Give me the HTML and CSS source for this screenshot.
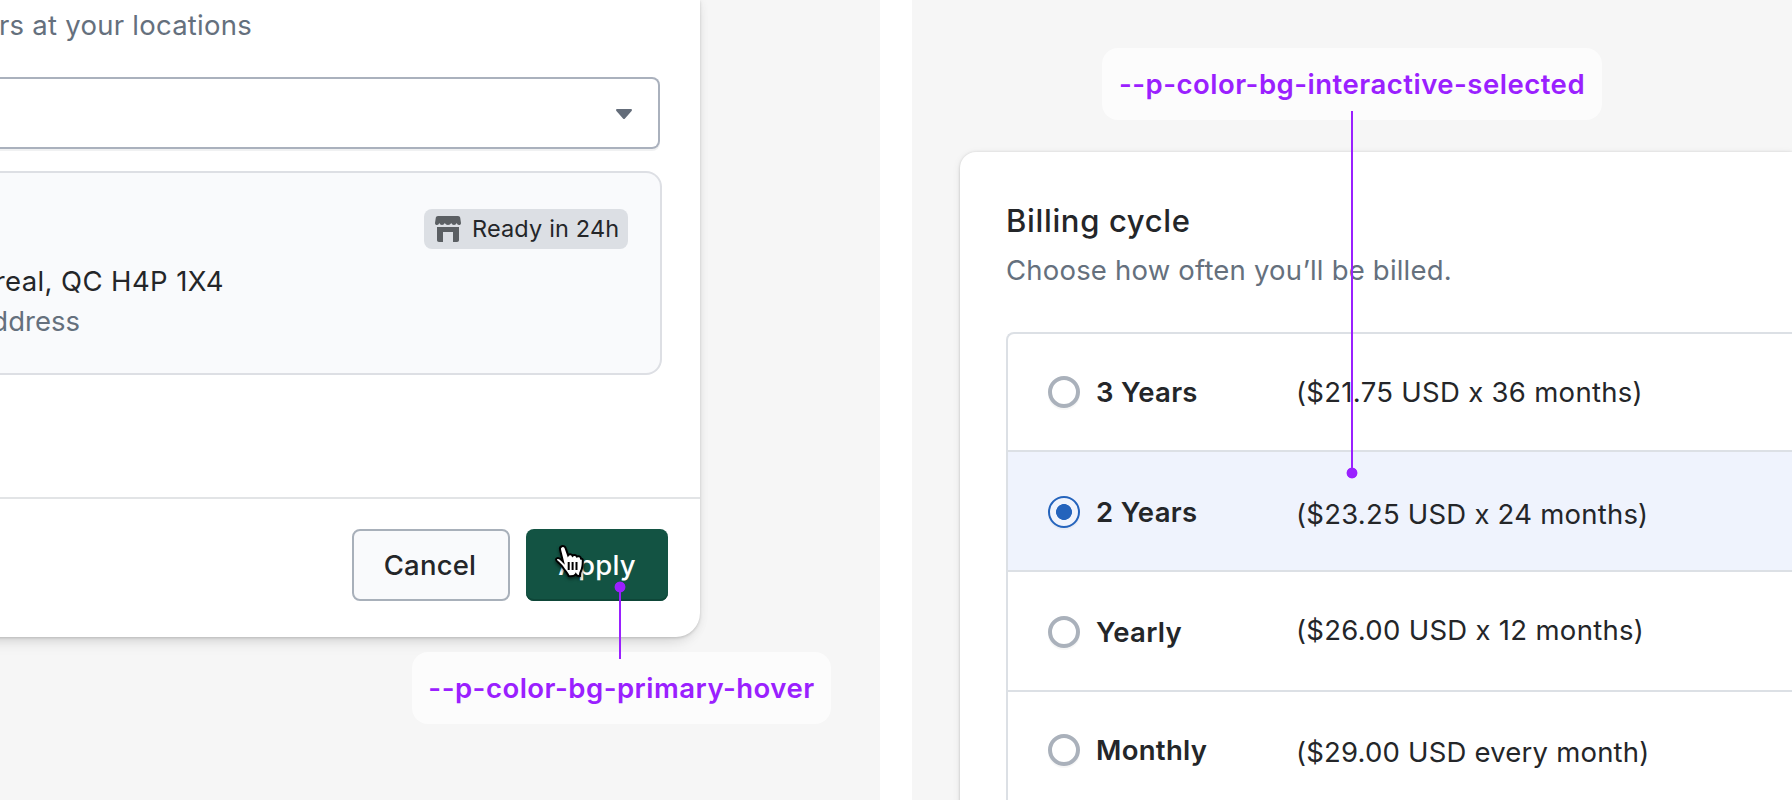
FILE: index.html
```html
<!DOCTYPE html>
<html lang="en">
<head>
<meta charset="utf-8">
<title>Color tokens</title>
<link rel="stylesheet" href="styles.css">
</head>
<body>
<main class="examples">
  <section class="panel panel-delivery">
    <div class="modal">
      <div class="modal-body">
        <p class="line subdued clip w-intro"><span>rs at your locations</span></p>
        <div class="select">
          <svg class="caret" width="16" height="10" viewBox="0 0 16 10"><path d="M1.2 0h13.6c1.1 0 1.5 1.2.8 2L9 9.4c-.6.7-1.4.7-2 0L.4 2C-.3 1.200.1 0 1.200 0z"/></svg>
        </div>
        <div class="location">
          <div class="badge">
            <svg class="store" width="26" height="26" viewBox="0 0 26 26"><path d="M3 0h20c1.200 0 2 .7 2.200 1.800L26 7c0 1.500-.8 2-2 2-1.300 0-1.700-.8-2.300-2-.6 1.200-1.400 2-2.700 2s-2.100-.8-2.800-2c-.7 1.200-1.700 2-3.200 2s-2.500-.8-3.200-2C9.100 8.200 8.300 9 7 9S4.900 8.200 4.300 7C3.700 8.200 3.300 9 2 9 .8 9 0 8.500 0 7L.8 1.800C1 .7 1.800 0 3 0zM2 11h22v13c0 1.300-.7 2-2 2h-4V16H8v10H4c-1.300 0-2-.7-2-2z"/></svg>
            <span>Ready in 24h</span>
          </div>
          <p class="line clip w-address"><span>real, QC H4P 1X4</span></p>
          <p class="line subdued clip w-link"><span>ddress</span></p>
        </div>
      </div>
      <div class="modal-footer">
        <button class="button">Cancel</button>
        <button class="button button-primary">Apply</button>
      </div>
    </div>
    <div class="token token-hover">--p-color-bg-primary-hover</div>
    <div class="pointer pointer-hover"></div>
    <svg class="cursor" width="34" height="38" viewBox="0 0 34 38"><path d="M9.800 3.200c1.800-.6 3.300.3 3.900 2.200l2.400 6.800c1-1.500 3.700-1.200 4.400.5 1.300-1.300 3.700-.9 4.300.8 2-.9 3.800.1 4.300 2.200 1-.2 1.800.6 1.700 2 0 4-.3 7.300-1.800 10.300-.6 1.200-1 1.800-1 3.200v1.800c-1.700.4-3.100 0-4.200-1.800-1.200 1.900-3 2.200-7 1.900-1.100-2.800-3.500-5-5.700-8.300-1.300-1.900-2.600-3.400-4.200-4.800-1.800-1.500-2.900-2.300-2.900-3.500.2-1.500 1.900-1.900 3.500-1 1.400.8 2.500 2 3.500 3L8.100 7c-.5-1.800.1-3.300 1.700-3.800z"/><path class="cursor-lines" d="M16.700 19v8M20.600 19v8M24.500 19v8"/></svg>
  </section>
  <section class="panel panel-billing">
    <div class="billing">
      <h2 class="title">Billing cycle</h2>
      <p class="line subdued choose">Choose how often you’ll be billed.</p>
      <div class="options">
        <label class="option"><i class="radio"></i><b>3 Years</b><span class="price p1">($21.75 USD x 36 months)</span></label>
        <label class="option selected"><i class="radio"></i><b>2 Years</b><span class="price p2">($23.25 USD x 24 months)</span></label>
        <label class="option"><i class="radio"></i><b>Yearly</b><span class="price p3">($26.00 USD x 12 months)</span></label>
        <label class="option last"><i class="radio"></i><b>Monthly</b><span class="price p4">($29.00 USD every month)</span></label>
      </div>
    </div>
    <div class="token token-selected">--p-color-bg-interactive-selected</div>
    <div class="pointer pointer-selected"></div>
  </section>
</main>
</body>
</html>
```
FILE: styles.css
```css
* { box-sizing: border-box; }
body { margin: 0; background: #fff; overflow: hidden; font: 27.5px/40px Inter, "Liberation Sans", sans-serif; color: #242629; }
p, h2 { margin: 0; }
.examples { display: grid; grid-template-columns: 880px 880px; gap: 32px; height: 800px; }
.panel { position: relative; background: #f6f6f6; overflow: hidden; }
.line { white-space: nowrap; height: 40px; }
.subdued { color: #65707d; }
.clip { display: flex; justify-content: flex-end; }

.modal { width: 740px; margin-left: -40px; padding-left: 40px; height: 637px; background: #fff; border-radius: 0 0 24px 0; box-shadow: 0 1px 3px rgba(0,0,0,.16), -6px 4px 16px rgba(0,0,0,.11), 0 2px 12px rgba(0,0,0,.06); display: flex; flex-direction: column; }
.modal-body { height: 497px; padding-top: 5px; }
.w-intro { width: 252px; letter-spacing: .25px; }
.select { width: 660px; height: 72px; margin-top: 32px; border: 2px solid #aab1bd; border-left: 0; border-radius: 0 8px 8px 0; box-shadow: 0 2px 0 #f0f1f2; display: flex; align-items: center; justify-content: flex-end; padding-right: 26px; }
.caret { fill: #646d7a; margin-top: 1px; }
.location { width: 662px; height: 204px; margin-top: 22px; padding: 36px 32px 0 0; border: 2px solid #dddfe4; border-left: 0; border-radius: 0 16px 16px 0; background: #f9fafc; display: flex; flex-direction: column; }
.badge { align-self: flex-end; width: 204px; height: 40px; margin-bottom: 12px; padding-left: 11px; border-radius: 8px; background: #dcdfe4; display: flex; align-items: center; gap: 11px; font-size: 23.500px; letter-spacing: .15px; white-space: nowrap; }
.store { fill: #5b5f63; flex: none; }
.w-address { width: 224px; letter-spacing: .4px; }
.w-link { width: 80px; }
.modal-footer { height: 140px; border-top: 2px solid #e2e4e6; padding: 30px 32px 0 0; display: flex; justify-content: flex-end; gap: 16px; }
.button { width: 158px; height: 72px; padding: 0 2px 0 0; border: 2px solid #a8b0ba; border-radius: 8px; background: #f9fafc; font: 500 27.5px/40px Inter, sans-serif; letter-spacing: .2px; color: #242629; }
.button-primary { width: 142px; padding: 0; border: 0; background: #135343; color: #fff; box-shadow: inset 0 -2px 0 #0e4638; }

.token { position: absolute; height: 72px; border-radius: 16px; background: #fcfcfc; color: #9a20ff; font-weight: 600; line-height: 72px; letter-spacing: .5px; text-align: center; white-space: nowrap; }
.token-hover { left: 412px; top: 652px; width: 419px; }
.token-selected { left: 190px; top: 48px; width: 500px; }
.pointer { position: absolute; width: 2px; background: #9a20ff; }
.pointer::after { content: ""; position: absolute; left: -5px; width: 12px; height: 12px; background: radial-gradient(circle, #9a20ff 5px, transparent 5.800px); }
.pointer-hover { left: 619px; top: 587px; height: 72px; }
.pointer-hover::after { top: -6px; }
.pointer-selected { left: 439px; top: 111px; height: 362px; }
.pointer-selected::after { bottom: -6px; }
.cursor { position: absolute; left: 552px; top: 543px; fill: #fff; stroke: #000; stroke-width: 2; filter: drop-shadow(0 2px 1.500px rgba(0,0,0,.5)); }

.billing { margin: 152px 0 0 48px; height: 700px; padding: 49px 0 0 46px; background: #fff; border-radius: 16px 0 0 0; box-shadow: 0 0 3px rgba(0,0,0,.12), 0 2px 8px rgba(0,0,0,.08), 0 3px 3px rgba(0,0,0,.08); }
.title { font-size: 31px; font-weight: 500; line-height: 40px; height: 49px; letter-spacing: .65px; }
.choose { letter-spacing: .2px; }
.options { margin-top: 42px; border: 2px solid #dce0e5; border-right: 0; border-radius: 8px 0 0 0; }
.option { display: grid; grid-template-columns: 32px 184px 1fr; column-gap: 16px; align-items: center; height: 120px; padding: 2px 0 0 40px; border-bottom: 2px solid #dce0e5; white-space: nowrap; }
.option:first-child { height: 118px; padding-top: 0; }
.option b { font-weight: 600; letter-spacing: .3px; }
.selected { background: #eff3fd; }
.radio { width: 32px; height: 32px; border: 4px solid #aab1bb; border-radius: 50%; box-shadow: 0 2px 1px rgba(0,0,0,.04); }
.selected .radio { border: 2px solid #2463bc; background: radial-gradient(circle, #2463bc 7.600px, transparent 8.300px); }
.last { padding-top: 0; padding-bottom: 2px; }
.price { letter-spacing: .3px; }
.p2 { padding-top: 4px; letter-spacing: .23px; }
.p4 { padding-top: 4px; letter-spacing: .2px; }
.p3 { padding-bottom: 4px; }
```
